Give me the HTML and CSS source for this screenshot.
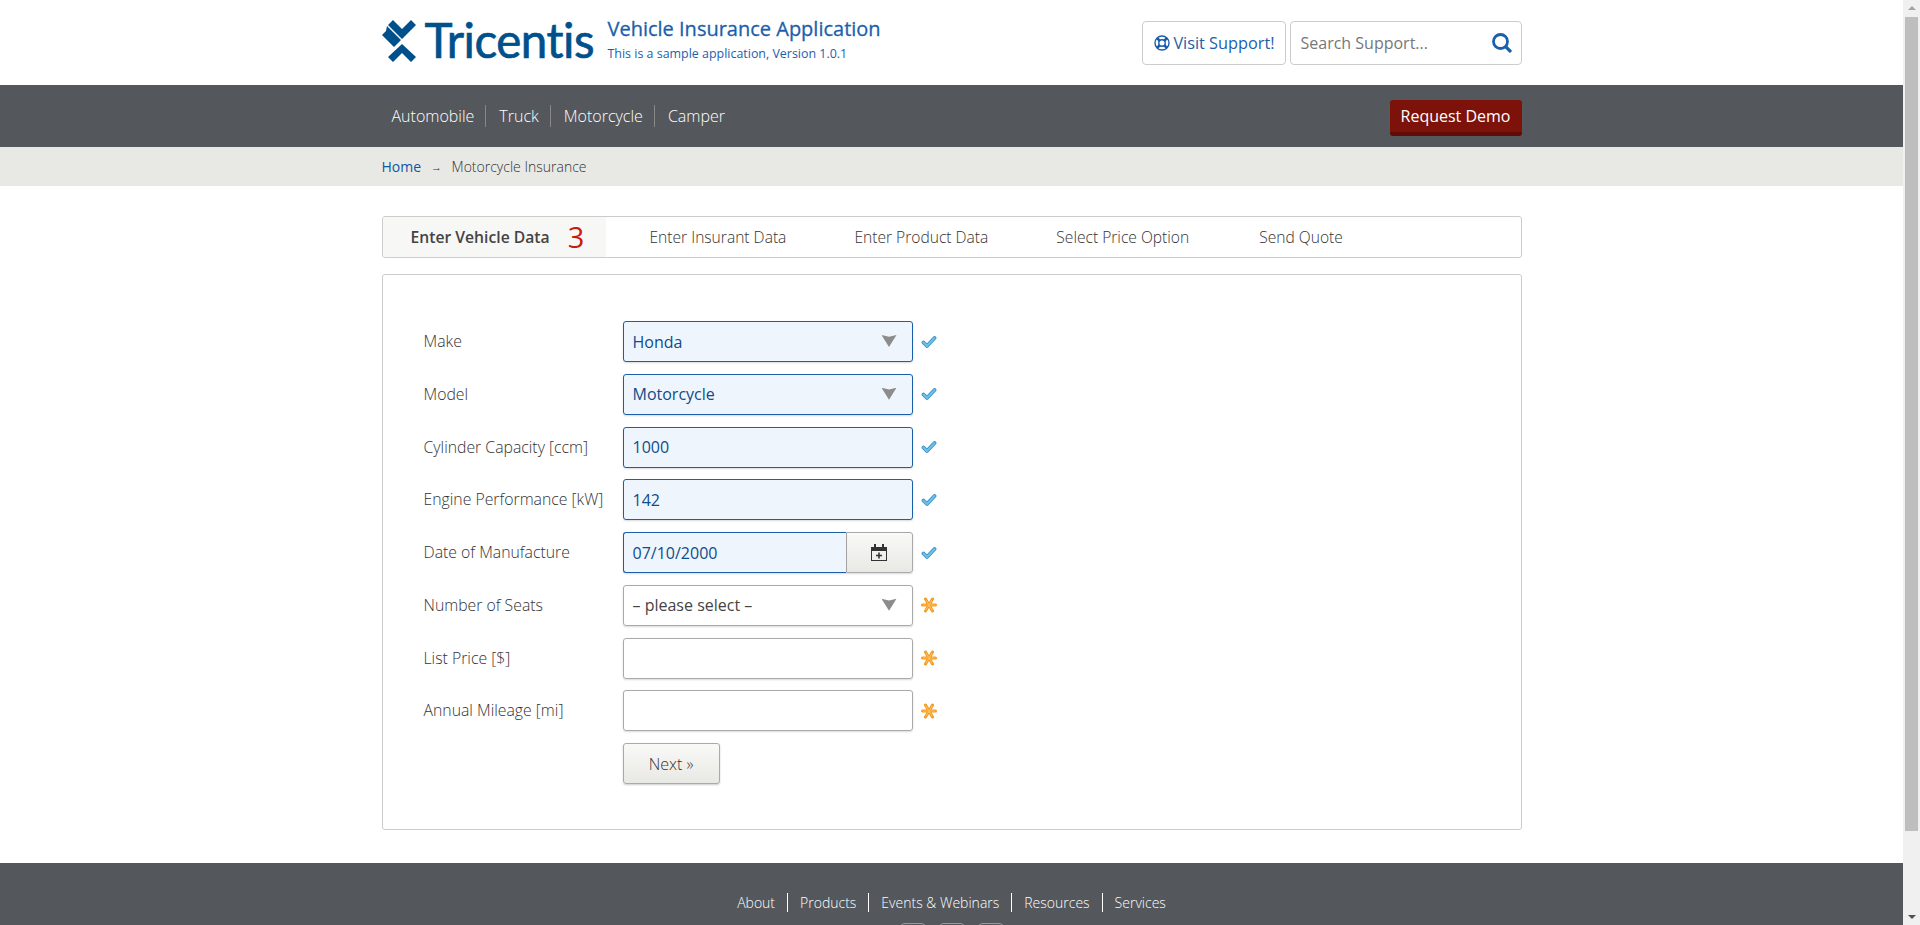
FILE: index.html
```html
<!DOCTYPE html>
<html lang="en">
<head>
    <meta charset="UTF-8">
    <title>Vehicle Insurance Application - Tricentis</title>
    <link rel="stylesheet" href="styles.css">
</head>
<body>
    <div class="page">
        <!-- Header -->
        <header class="header">
            <div class="container header-inner">
                <a class="logo" href="#">
                    <svg class="logo-mark" viewBox="0 0 38 42" width="38" height="42">
                        <path fill="#00508c" d="M12 0 L21 9 L30 0 L35 5 L21 19 L7 5 Z"/>
                        <path fill="#00508c" d="M6 6 L20 20 L13 27 L1 15 L5 11 Z"/>
                        <path fill="#00508c" d="M21 24 L35 37 L30 42 L21 33 L12 42 L7 37 Z"/>
                    </svg>
                    <span class="logo-text">Tricentis</span>
                </a>
                <div class="app-title">
                    <div class="app-name">Vehicle Insurance Application</div>
                    <div class="app-version">This is a sample application, Version 1.0.1</div>
                </div>
                <div class="header-tools">
                    <a class="support-btn" href="#">
                        <svg viewBox="0 0 16 16" width="16" height="16" fill="none" stroke="#1b5fab"><circle cx="8" cy="8" r="7" stroke-width="1.4"/><circle cx="8" cy="8" r="3.2" stroke-width="1.4"/><path d="M3 3l2.8 2.8M13 3l-2.8 2.8M3 13l2.8-2.8M13 13l-2.8-2.8" stroke-width="2.6"/></svg>
                        Visit Support!
                    </a>
                    <div class="search-box">
                        <span>Search Support...</span>
                        <svg viewBox="0 0 20 20" width="20" height="20"><circle cx="8.5" cy="8.5" r="7" fill="none" stroke="#1b5fab" stroke-width="2.8"/><path d="M13.5 13.5l5.5 5.5" stroke="#1b5fab" stroke-width="3.2"/></svg>
                    </div>
                </div>
            </div>
        </header>

        <!-- Main navigation -->
        <nav class="mainnav">
            <div class="container mainnav-inner">
                <ul class="nav-links">
                    <li><a href="#">Automobile</a></li>
                    <li><a href="#">Truck</a></li>
                    <li><a href="#">Motorcycle</a></li>
                    <li><a href="#">Camper</a></li>
                </ul>
                <a class="demo-btn" href="#">Request Demo</a>
            </div>
        </nav>

        <!-- Breadcrumb -->
        <div class="breadcrumb">
            <div class="container breadcrumb-inner">
                <a href="#">Home</a>
                <span class="crumb-arrow">→</span>
                <span>Motorcycle Insurance</span>
            </div>
        </div>

        <main class="container">
            <!-- Wizard tabs -->
            <div class="tabs">
                <div class="tab active">Enter Vehicle Data <span class="counter">3</span></div>
                <div class="tab">Enter Insurant Data</div>
                <div class="tab">Enter Product Data</div>
                <div class="tab">Select Price Option</div>
                <div class="tab">Send Quote</div>
            </div>

            <!-- Form -->
            <form class="panel">
                <div class="row">
                    <label>Make</label>
                    <div class="field valid select">Honda<span class="caret"></span></div>
                    <svg class="mark" viewBox="0 0 16 16"><use href="#check"/></svg>
                </div>
                <div class="row">
                    <label>Model</label>
                    <div class="field valid select">Motorcycle<span class="caret"></span></div>
                    <svg class="mark" viewBox="0 0 16 16"><use href="#check"/></svg>
                </div>
                <div class="row">
                    <label>Cylinder Capacity [ccm]</label>
                    <div class="field valid">1000</div>
                    <svg class="mark" viewBox="0 0 16 16"><use href="#check"/></svg>
                </div>
                <div class="row">
                    <label>Engine Performance [kW]</label>
                    <div class="field valid">142</div>
                    <svg class="mark" viewBox="0 0 16 16"><use href="#check"/></svg>
                </div>
                <div class="row">
                    <label>Date of Manufacture</label>
                    <div class="date-group">
                        <div class="field valid date-input">07/10/2000</div>
                        <div class="date-btn">
                            <svg viewBox="0 0 16 17" width="16" height="17" fill="none" stroke="#333"><rect x="0.5" y="3.5" width="15" height="13"/><path d="M0.5 3.5h15v3h-15z" fill="#333"/><path d="M4 0v4M12 0v4" stroke-width="2"/><path d="M8 8.5v6M5 11.5h6" stroke-width="1.6"/></svg>
                        </div>
                    </div>
                    <svg class="mark" viewBox="0 0 16 16"><use href="#check"/></svg>
                </div>
                <div class="row">
                    <label>Number of Seats</label>
                    <div class="field select">– please select –<span class="caret"></span></div>
                    <svg class="mark" viewBox="0 0 16 16"><use href="#star"/></svg>
                </div>
                <div class="row">
                    <label>List Price [$]</label>
                    <div class="field"></div>
                    <svg class="mark" viewBox="0 0 16 16"><use href="#star"/></svg>
                </div>
                <div class="row">
                    <label>Annual Mileage [mi]</label>
                    <div class="field"></div>
                    <svg class="mark" viewBox="0 0 16 16"><use href="#star"/></svg>
                </div>
                <div class="row">
                    <label></label>
                    <button class="next-btn" type="button">Next »</button>
                </div>
            </form>
        </main>

        <!-- Footer -->
        <footer class="footer">
            <ul class="footer-links">
                <li><a href="#">About</a></li>
                <li><a href="#">Products</a></li>
                <li><a href="#">Events &amp; Webinars</a></li>
                <li><a href="#">Resources</a></li>
                <li><a href="#">Services</a></li>
            </ul>
            <div class="social">
                <span></span><span></span><span></span>
            </div>
        </footer>
    </div>

    <!-- Scrollbar -->
    <div class="scrollbar">
        <span class="scroll-up"></span>
        <div class="scroll-thumb"></div>
        <span class="scroll-down"></span>
    </div>

    <svg class="defs" width="0" height="0">
        <defs>
            <g id="check" fill="none" stroke-linecap="round" stroke-linejoin="round">
                <path d="M2.5 8.5L6 12L13.5 4" stroke="#3a8fc4" stroke-width="3.8"/>
                <path d="M2.5 8.5L6 12L13.5 4" stroke="#6cc2ec" stroke-width="2"/>
            </g>
            <g id="star" fill="none" stroke-linecap="round">
                <path d="M1.5 8h13M4.5 2l7 12M11.5 2l-7 12" stroke="#f59a1c" stroke-width="3"/>
                <path d="M2 8h12M5 3l6 10M11 3l-6 10" stroke="#ffbd5c" stroke-width="1.1"/>
            </g>
        </defs>
    </svg>
</body>
</html>
```
FILE: styles.css
```css
/* General Styles */
* {
    margin: 0;
    padding: 0;
    box-sizing: border-box;
}

html, body {
    height: 925px;
    overflow: hidden;
}

body {
    display: flex;
    font-family: 'Open Sans', Arial, sans-serif;
    font-size: 16px;
    color: #444;
    background: #fff;
}

a {
    color: inherit;
    text-decoration: none;
}

ul {
    list-style: none;
}

.page {
    width: 1903px;
    height: 925px;
    overflow: hidden;
}

.container {
    width: 1140px;
    margin: 0 auto;
}

/* Header */
.header {
    height: 85px;
}

.header-inner {
    display: flex;
    align-items: center;
    height: 85px;
}

.logo {
    display: flex;
    align-items: center;
    gap: 6px;
    width: 226px;
    padding-bottom: 4px;
}

.logo-mark {
    margin-left: -1px;
}

.logo-text {
    font-family: Lato, sans-serif;
    font-size: 47.5px;
    line-height: 48px;
    color: #00508c;
    letter-spacing: -0.5px;
    -webkit-text-stroke: 0.7px #00508c;
    padding-bottom: 2px;
}

.app-title {
    padding-bottom: 5px;
    color: #1b5fab;
}

.app-name {
    font-size: 20px;
    line-height: 28px;
    -webkit-text-stroke: 0.3px #1b5fab;
}

.app-version {
    font-size: 12.45px;
    line-height: 22px;
}

.header-tools {
    display: flex;
    gap: 4px;
    margin-left: auto;
}

.support-btn {
    display: flex;
    align-items: center;
    gap: 3px;
    height: 44px;
    padding: 0 10px 0 11px;
    border: 1px solid #ccc;
    border-radius: 4px;
    color: #1b5fab;
    font-size: 16.3px;
}

.search-box {
    display: flex;
    align-items: center;
    justify-content: space-between;
    width: 232px;
    height: 44px;
    padding: 0 9px 0 10px;
    border: 1px solid #ccc;
    border-radius: 4px;
    color: #777;
}

/* Navigation */
.mainnav {
    background: #54575c;
    height: 62px;
}

.mainnav-inner {
    display: flex;
    align-items: center;
    justify-content: space-between;
    height: 62px;
}

.nav-links {
    display: flex;
    color: #fff;
    font-weight: 300;
}

.nav-links li {
    padding: 0 11px 0 13px;
    line-height: 22px;
    border-right: 1px solid #888;
}

.nav-links li:first-child {
    padding-left: 10px;
}

.nav-links li:last-child {
    border-right: none;
}

.demo-btn {
    margin-top: 4px;
    padding: 0 11px;
    height: 36px;
    line-height: 32px;
    background: #7d120a;
    border-bottom: 4px solid #5f0c06;
    border-radius: 3px;
    color: #fff;
}

/* Breadcrumb */
.breadcrumb {
    background: #e8e9e4;
    height: 39px;
}

.breadcrumb-inner {
    display: flex;
    align-items: center;
    height: 39px;
    font-size: 14px;
    font-weight: 300;
    color: #333;
}

.breadcrumb-inner a {
    color: #0f55a5;
    font-weight: 400;
}

.crumb-arrow {
    margin: 0 9.5px 0 10px;
    font-size: 11px;
}

/* Wizard tabs */
.tabs {
    display: flex;
    height: 42px;
    margin-top: 30px;
    border: 1px solid #ccc;
    border-radius: 3px;
    overflow: hidden;
}

.tab {
    display: flex;
    align-items: center;
    padding: 0 34px;
    font-size: 15.6px;
    font-weight: 300;
    color: #333;
}

.tab:last-child {
    margin-left: 2px;
}

.tab.active {
    width: 223px;
    margin-right: 10px;
    padding: 0 0 0 28px;
    font-size: 15.7px;
    font-weight: 600;
    color: #444;
    background: #f7f7f5;
    white-space: pre;
}

.counter {
    margin-left: 14px;
    font-size: 29px;
    line-height: 30px;
    font-weight: 400;
    color: #c81a10;
}

/* Form panel */
.panel {
    height: 556px;
    margin-top: 16px;
    padding: 46px 41px;
    border: 1px solid #ccc;
    border-radius: 3px;
}

.row {
    display: flex;
    align-items: center;
    height: 41px;
    margin-bottom: 11.75px;
}

.row label {
    width: 199px;
    padding-bottom: 1px;
    font-size: 15.8px;
    font-weight: 300;
    color: #333;
}

.field {
    display: flex;
    align-items: center;
    position: relative;
    width: 290px;
    height: 41px;
    padding: 0 9px;
    border: 1px solid #aaa;
    border-radius: 3px;
    box-shadow: 0 1px 2px rgba(0, 0, 0, 0.15);
    font-size: 16px;
}

.field.valid {
    background: #eef5fd;
    border-color: #1b5fab;
    color: #0f4c8a;
}

.caret {
    position: absolute;
    right: 15px;
    top: 13px;
    width: 15px;
    height: 12px;
    background: #8c8c8c;
    clip-path: polygon(0 0, 50% 14%, 100% 0, 50% 100%);
}

.date-group {
    display: flex;
    width: 290px;
}

.date-input {
    width: 223px;
    border-right: none;
    border-radius: 3px 0 0 3px;
}

.date-btn {
    display: flex;
    align-items: center;
    justify-content: center;
    width: 67px;
    height: 41px;
    background: linear-gradient(#f9f9f8, #e8e9e4);
    border: 1px solid #aaa;
    border-radius: 0 3px 3px 0;
    box-shadow: 0 1px 2px rgba(0, 0, 0, 0.15);
}

.mark {
    width: 16px;
    height: 16px;
    margin-left: 8px;
}

.next-btn {
    width: 97px;
    height: 41px;
    background: linear-gradient(#f9f9f8, #e8e9e4);
    border: 1px solid #aaa;
    border-radius: 3px;
    box-shadow: 0 1px 2px rgba(0, 0, 0, 0.2);
    font-family: inherit;
    font-size: 16px;
    font-weight: 300;
    color: #333;
}

/* Footer */
.footer {
    margin-top: 33px;
    height: 62px;
    background: #54575c;
    padding-top: 30px;
}

.footer-links {
    display: flex;
    justify-content: center;
    color: #fff;
    font-size: 14px;
    font-weight: 300;
}

.footer-links li {
    padding: 0 12px;
    line-height: 19px;
    border-right: 1px solid #fff;
}

.footer-links li:last-child {
    border-right: none;
}

.social {
    display: flex;
    justify-content: center;
    gap: 11px;
    margin-top: 11px;
}

.social span {
    width: 28px;
    height: 28px;
    border: 1px solid #999;
    border-radius: 6px;
}

/* Scrollbar */
.scrollbar {
    position: relative;
    width: 17px;
    height: 925px;
    background: #f0f0f0;
}

.scroll-up, .scroll-down {
    position: absolute;
    left: 5px;
    border-left: 4px solid transparent;
    border-right: 4px solid transparent;
}

.scroll-up {
    top: 6px;
    border-bottom: 4px solid #a3a3a3;
}

.scroll-down {
    bottom: 6px;
    border-top: 4px solid #505050;
}

.scroll-thumb {
    position: absolute;
    top: 17px;
    left: 2px;
    width: 13px;
    height: 814px;
    background: #bebebe;
}

.defs {
    position: absolute;
}
```
